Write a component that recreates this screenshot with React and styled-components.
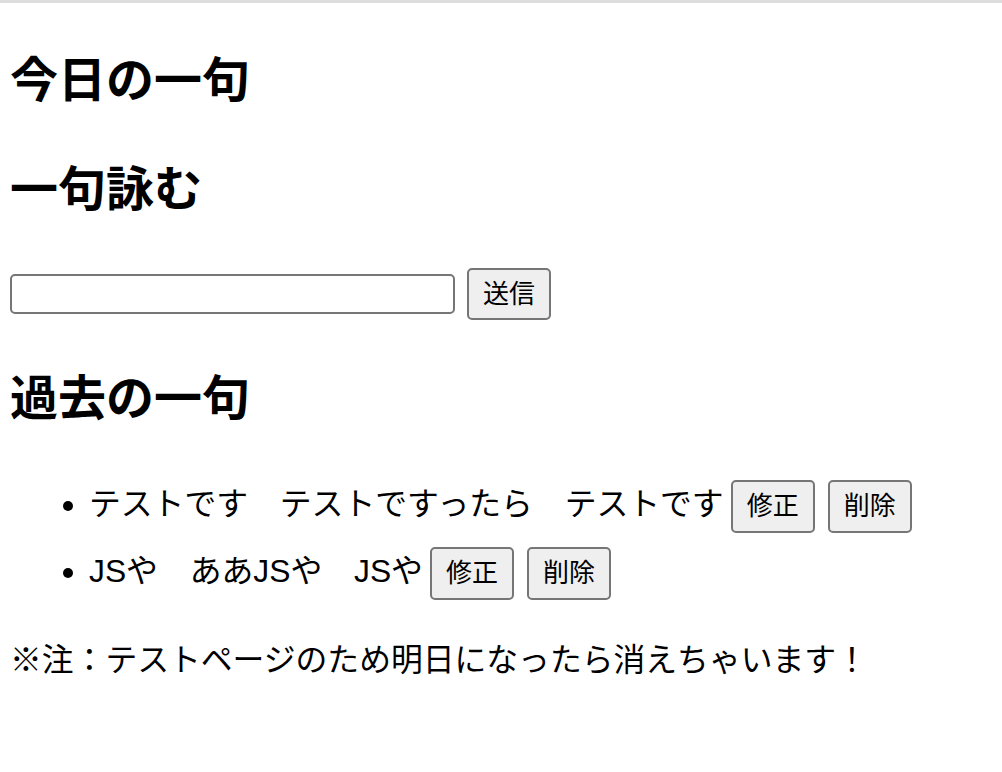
import React, { useState } from 'react';
import styled, { createGlobalStyle } from 'styled-components';

const GlobalStyle = createGlobalStyle`
  html, body {
    margin: 0;
    padding: 0;
    background: #fff;
  }
  body {
    font-family: 'Liberation Sans', 'Noto Sans CJK JP', sans-serif;
    font-size: 31.8px;
    color: #000;
  }
`;

const TopLine = styled.div`
  height: 3px;
  background: #dedede;
`;

const Page = styled.main`
  padding: 0 10px;
  overflow: hidden;
`;

const Heading = styled.h2`
  font-family: 'Noto Sans CJK JP', sans-serif;
  font-size: 48px;
  font-weight: 700;
  line-height: 71px;
  margin: 38px 0;
`;

const Form = styled.form`
  display: flex;
  align-items: center;
  gap: 12px;
  height: 55px;
  margin-top: 45px;
`;

const TextInput = styled.input`
  width: 445px;
  height: 40px;
  box-sizing: border-box;
  border: 2px solid #767676;
  border-radius: 5px;
  padding: 2px 4px;
  font-size: 26px;
  font-family: inherit;
  background: #fff;
`;

const Button = styled.button`
  display: inline-block;
  box-sizing: border-box;
  height: ${(p) => p.$h || 53}px;
  padding: 0 14px;
  margin-left: ${(p) => p.$gap || 0}px;
  border: 2px solid #767676;
  border-radius: 5px;
  background: #efefef;
  color: #000;
  font-family: inherit;
  font-size: 26px;
  line-height: 1;
  vertical-align: baseline;
`;

const List = styled.ul`
  margin: 41px 0 32px;
  padding-left: 79px;
`;

const Item = styled.li`
  line-height: 67px;
`;

const Note = styled.p`
  margin: 32px 0;
  line-height: 46px;
`;

const haiku = [
  ['テストです', 'テストですったら', 'テストです'],
  ['JSや', 'ああJSや', 'JSや'],
];

export default function App() {
  const [text, setText] = useState('');

  return (
    <>
      <GlobalStyle />
      <TopLine />
      <Page>
        <Heading>今日の一句</Heading>
        <Heading>一句詠む</Heading>
        <Form onSubmit={(e) => e.preventDefault()}>
          <TextInput value={text} onChange={(e) => setText(e.target.value)} />
          <Button $h={52}>送信</Button>
        </Form>
        <Heading>過去の一句</Heading>
        <List>
          {haiku.map((h, i) => (
            <Item key={i}>
              {h.join('　')}
              <Button $gap={7}>修正</Button>
              <Button $gap={13}>削除</Button>
            </Item>
          ))}
        </List>
        <Note>※注：テストページのため明日になったら消えちゃいます！</Note>
      </Page>
    </>
  );
}
